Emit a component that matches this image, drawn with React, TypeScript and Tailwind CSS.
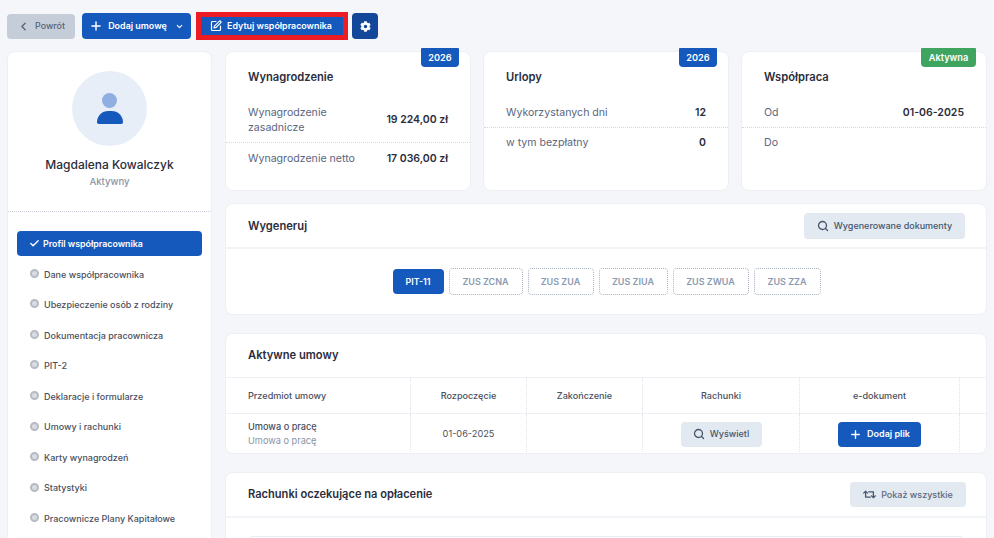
import { Check, ChevronDown, ChevronLeft, Plus, Search, SquarePen } from "lucide-react";
import { FaCog, FaRetweet } from "react-icons/fa";

const menu = [
  "Dane współpracownika",
  "Ubezpieczenie osób z rodziny",
  "Dokumentacja pracownicza",
  "PIT-2",
  "Deklaracje i formularze",
  "Umowy i rachunki",
  "Karty wynagrodzeń",
  "Statystyki",
  "Pracownicze Plany Kapitałowe",
];

const zusTabs = [
  { label: "ZUS ZCNA", w: "w-[74px]" },
  { label: "ZUS ZUA", w: "w-[66px]" },
  { label: "ZUS ZIUA", w: "w-[69px]" },
  { label: "ZUS ZWUA", w: "w-[76px]" },
  { label: "ZUS ZZA", w: "w-[67px]" },
];

const Badge = ({ label, color, w }: { label: string; color: string; w: string }) => (
  <div className={`absolute -top-[4px] flex h-[19px] items-center justify-center rounded-b-[4px] rounded-t-[1px] text-[9.2px] font-semibold text-white ${color} ${w}`}>
    {label}
  </div>
);

const StatCard = ({
  title,
  badge,
  rows,
}: {
  title: string;
  badge: React.ReactNode;
  rows: { label: React.ReactNode; value: string; h: string }[];
}) => (
  <div className="relative h-[140px] rounded-[8px] border border-[#eef0f5] bg-white">
    {badge}
    <div className="pl-[22px] pt-[16px] text-[11.2px] font-semibold leading-[18px] text-[#2b2d3b]">{title}</div>
    <div className="mt-[11px]">
      {rows.map((row, i) => (
        <div
          key={i}
          className={`flex items-center justify-between pl-[22px] pr-[22px] text-[10.6px] leading-[15px] text-[#5a6680] ${row.h} ${i === 0 ? "border-b border-dotted border-[#d5d8e0]" : ""}`}
        >
          <div>{row.label}</div>
          <div className="text-[10.5px] font-semibold text-[#2b2d3b]">{row.value}</div>
        </div>
      ))}
    </div>
  </div>
);

const App = () => {
  return (
    <div className="h-[538px] w-[994px] overflow-hidden bg-[#f5f6f9] px-[7px] pt-[12px] font-['Inter',sans-serif]">
      {/* Toolbar */}
      <div className="flex h-[28px] items-center">
        <button className="flex h-[25px] w-[68px] items-center justify-center gap-[5px] rounded-[4px] bg-[#c5ced8] text-[8.9px] font-medium text-[#56657a]">
          <ChevronLeft size={13} strokeWidth={2.5} />
          Powrót
        </button>
        <button className="ml-[7px] flex h-[26px] w-[109px] items-center justify-center gap-[5px] rounded-[4px] bg-[#1559bd] text-[8.95px] font-semibold text-white">
          <Plus size={14} strokeWidth={2.5} />
          Dodaj umowę
          <ChevronDown size={9} strokeWidth={3} className="ml-[3px]" />
        </button>
        <div className="ml-[5px] h-[28px] w-[152px] border-[5px] border-[#ed1c24] bg-[#1559bd]">
          <button className="flex h-full w-[140px] items-center justify-center gap-[5px] text-[8.9px] font-semibold text-white">
            <SquarePen size={12} strokeWidth={2.4} />
            Edytuj współpracownika
          </button>
        </div>
        <button className="ml-[4px] flex h-[26px] w-[26px] items-center justify-center rounded-[4px] bg-[#12479a] text-white">
          <FaCog size={11} />
        </button>
      </div>

      <div className="mt-[11px] flex gap-[13px]">
        {/* Sidebar */}
        <aside className="h-[500px] w-[205px] shrink-0 rounded-[8px] border border-[#eef0f5] bg-white">
          <div className="flex h-[160px] flex-col items-center border-b border-dotted border-[#ccd0d8] pt-[19px]">
            <div className="flex h-[75px] w-[75px] flex-col items-center justify-center rounded-full bg-[#e8eef8]">
              <div className="h-[15px] w-[15px] rounded-full bg-[#8fafe2]" />
              <div className="mt-[3px] h-[13px] w-[26px] rounded-t-[13px] rounded-b-[2px] bg-[#1559bd]" />
            </div>
            <div className="mt-[10px] text-[12px] font-medium leading-[18px] text-[#2b2d3b]">Magdalena Kowalczyk</div>
            <div className="text-[9.6px] font-medium leading-[16px] text-[#8a93a3]">Aktywny</div>
          </div>
          <nav className="px-[9px] pt-[19px]">
            <div className="flex h-[25px] items-center gap-[3px] rounded-[4px] bg-[#1559bd] pl-[12px] text-[8.85px] font-semibold text-white">
              <Check size={11} strokeWidth={3} />
              Profil współpracownika
            </div>
            <div className="pt-[3px]">
              {menu.map((item) => (
                <div key={item} className="flex h-[30.55px] items-center pl-[13px] text-[9px] font-medium text-[#4a4f5e]">
                  <span className="mr-[5px] -mt-[2px] h-[9px] w-[9px] rounded-full border-2 border-[#b6bac2] bg-[#d9dce1]" />
                  {item}
                </div>
              ))}
            </div>
          </nav>
        </aside>

        <main className="w-[762px] shrink-0">
          {/* Stat cards */}
          <div className="grid grid-cols-3 gap-[12px]">
            <StatCard
              title="Wynagrodzenie"
              badge={
                <div className="absolute right-[11px] top-0">
                  <div className="relative h-0 w-[38px]">
                    <Badge label="2026" color="bg-[#1559bd]" w="w-[38px]" />
                  </div>
                </div>
              }
              rows={[
                {
                  label: (
                    <>
                      Wynagrodzenie
                      <br />
                      zasadnicze
                    </>
                  ),
                  value: "19 224,00 zł",
                  h: "h-[46px]",
                },
                { label: "Wynagrodzenie netto", value: "17 036,00 zł", h: "h-[31px]" },
              ]}
            />
            <StatCard
              title="Urlopy"
              badge={
                <div className="absolute right-[11px] top-0">
                  <div className="relative h-0 w-[38px]">
                    <Badge label="2026" color="bg-[#1559bd]" w="w-[38px]" />
                  </div>
                </div>
              }
              rows={[
                { label: "Wykorzystanych dni", value: "12", h: "h-[31px]" },
                { label: "w tym bezpłatny", value: "0", h: "h-[29px]" },
              ]}
            />
            <StatCard
              title="Współpraca"
              badge={
                <div className="absolute right-[10px] top-0">
                  <div className="relative h-0 w-[55px]">
                    <Badge label="Aktywna" color="bg-[#3fa45f]" w="w-[55px]" />
                  </div>
                </div>
              }
              rows={[
                { label: "Od", value: "01-06-2025", h: "h-[31px]" },
                { label: "Do", value: "", h: "h-[29px]" },
              ]}
            />
          </div>

          {/* Wygeneruj */}
          <section className="mt-[12px] h-[112px] rounded-[8px] border border-[#eef0f5] bg-white">
            <div className="flex h-[45px] items-center justify-between border-b-2 border-[#f3f4f8] pl-[22px] pr-[21px]">
              <div className="pt-[1px] text-[11.2px] font-semibold text-[#2b2d3b]">Wygeneruj</div>
              <button className="flex h-[26px] w-[161px] items-center justify-center gap-[5px] rounded-[4px] bg-[#e3e9f0] text-[9px] font-medium text-[#46566c]">
                <Search size={12} strokeWidth={2.6} />
                Wygenerowane dokumenty
              </button>
            </div>
            <div className="flex justify-center gap-[5px] pl-[1px] pt-[19px]">
              <button className="mt-[1px] flex h-[25px] w-[51px] items-center justify-center rounded-[4px] bg-[#1559bd] text-[8.8px] font-semibold text-white">
                PIT-11
              </button>
              {zusTabs.map((tab) => (
                <button
                  key={tab.label}
                  className={`flex h-[27px] items-center justify-center rounded-[4px] border border-dotted border-[#aab2bf] text-[9px] font-semibold text-[#8b9ab0] ${tab.w}`}
                >
                  {tab.label}
                </button>
              ))}
            </div>
          </section>

          {/* Aktywne umowy */}
          <section className="mt-[18px] h-[121px] overflow-hidden rounded-[8px] border border-[#eef0f5] bg-white">
            <div className="flex h-[44px] items-center border-b border-[#eef0f5] pl-[22px] text-[11.2px] font-semibold text-[#2b2d3b]">
              Aktywne umowy
            </div>
            <div className="grid h-[36px] grid-cols-[184px_116px_116px_157px_160px_1fr] items-stretch border-b border-[#eef0f5] text-[9.1px] font-medium text-[#4a4f5e]">
              <div className="flex items-center pl-[22px]">Przedmiot umowy</div>
              <div className="flex items-center justify-center border-l border-dotted border-[#dfe2e8]">Rozpoczęcie</div>
              <div className="flex items-center justify-center border-l border-dotted border-[#dfe2e8]">Zakończenie</div>
              <div className="flex items-center justify-center border-l border-dotted border-[#dfe2e8]">Rachunki</div>
              <div className="flex items-center justify-center border-l border-dotted border-[#dfe2e8]">e-dokument</div>
              <div className="border-l border-dotted border-[#dfe2e8]" />
            </div>
            <div className="grid h-[40px] grid-cols-[184px_116px_116px_157px_160px_1fr] items-stretch text-[9.2px] text-[#4a4f5e]">
              <div className="flex flex-col justify-center pl-[22px] leading-[14px]">
                <span className="font-medium">Umowa o pracę</span>
                <span className="text-[#8a93a3]">Umowa o pracę</span>
              </div>
              <div className="flex items-center justify-center border-l border-dotted border-[#dfe2e8]">01-06-2025</div>
              <div className="border-l border-dotted border-[#dfe2e8]" />
              <div className="flex items-center justify-center border-l border-dotted border-[#dfe2e8]">
                <button className="flex h-[25px] w-[81px] items-center justify-center gap-[5px] rounded-[4px] bg-[#e3e9f0] text-[9px] font-medium text-[#46566c]">
                  <Search size={12} strokeWidth={2.6} />
                  Wyświetl
                </button>
              </div>
              <div className="flex items-center justify-center border-l border-dotted border-[#dfe2e8]">
                <button className="flex h-[25px] w-[83px] items-center justify-center gap-[5px] rounded-[4px] bg-[#1559bd] text-[9px] font-semibold text-white">
                  <Plus size={13} strokeWidth={2.5} />
                  Dodaj plik
                </button>
              </div>
              <div className="border-l border-dotted border-[#dfe2e8]" />
            </div>
          </section>

          {/* Rachunki */}
          <section className="mt-[18px] h-[100px] rounded-[8px] border border-[#eef0f5] bg-white">
            <div className="flex h-[45px] items-center justify-between border-b-2 border-[#f3f4f8] pl-[22px] pr-[20px]">
              <div className="text-[11.1px] font-semibold text-[#2b2d3b]">Rachunki oczekujące na opłacenie</div>
              <button className="flex h-[25px] w-[116px] items-center justify-center gap-[5px] rounded-[4px] bg-[#e3e9f0] text-[9px] font-medium text-[#5a6880]">
                <FaRetweet size={13} className="text-[#46566c]" />
                Pokaż wszystkie
              </button>
            </div>
            <div className="mx-[22px] mt-[18px] h-[20px] rounded-t-[4px] border border-[#e9ecf2]" />
          </section>
        </main>
      </div>
    </div>
  );
};

export default App;
